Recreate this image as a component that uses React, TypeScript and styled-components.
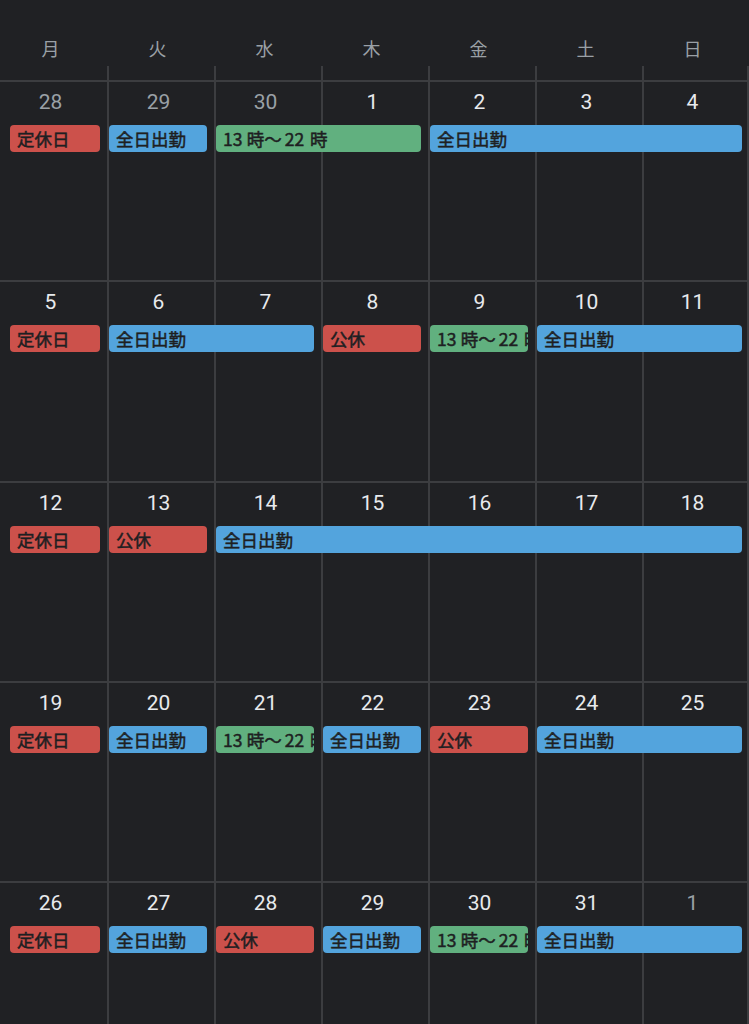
import React from "react";
import styled, { createGlobalStyle } from "styled-components";

const GlobalStyle = createGlobalStyle`
  html, body {
    margin: 0;
    padding: 0;
    background: #202124;
  }
  * {
    box-sizing: border-box;
  }
`;

const LINE = "#3c3d40";

const Page = styled.div`
  width: 749px;
  height: 1024px;
  overflow: hidden;
  background: #202124;
  font-family: "Noto Sans CJK JP", "Noto Sans", sans-serif;
`;

const Header = styled.div`
  display: grid;
  grid-template-columns: repeat(7, 1fr);
  height: 82px;
  border-bottom: 2px solid ${LINE};
`;

const HeaderCell = styled.div`
  display: flex;
  flex-direction: column;
`;

const WeekdayLabel = styled.div`
  flex: 1;
  padding: 35px 6px 0 0;
  text-align: center;
  font-size: 18px;
  line-height: 26px;
  color: #9aa0a6;
`;

const Tick = styled.div<{ $first: boolean; $last: boolean }>`
  height: 14px;
  border-left: ${(p) => (p.$first ? "none" : `2px solid ${LINE}`)};
  border-right: ${(p) => (p.$last ? `2px solid ${LINE}` : "none")};
`;

const Week = styled.div`
  display: grid;
  grid-template-columns: repeat(7, 1fr);
  grid-template-rows: 43px 27px 1fr;
  height: 200.3px;
  border-bottom: 2px solid ${LINE};
`;

const DayCell = styled.div<{ $col: number }>`
  grid-row: 1 / -1;
  grid-column: ${(p) => p.$col};
  padding-right: 6px;
  border-left: ${(p) => (p.$col === 1 ? "none" : `2px solid ${LINE}`)};
  border-right: ${(p) => (p.$col === 7 ? `2px solid ${LINE}` : "none")};
`;

const DayNumber = styled.div<{ $muted: boolean }>`
  padding-top: 8px;
  text-align: center;
  font-family: Roboto, "Noto Sans", sans-serif;
  font-size: 21px;
  line-height: 24px;
  color: ${(p) => (p.$muted ? "#9aa0a6" : "#e8eaed")};
`;

type Kind = "off" | "work" | "shift";

const COLORS: Record<Kind, string> = {
  off: "#cc514b",
  work: "#53a4dd",
  shift: "#61b07f",
};

const Bar = styled.div<{ $start: number; $span: number; $kind: Kind }>`
  grid-row: 2;
  grid-column: ${(p) => p.$start} / span ${(p) => p.$span};
  margin-left: ${(p) => (p.$start === 1 ? "10px" : "2px")};
  margin-right: 7px;
  background: ${(p) => COLORS[p.$kind]};
  border-radius: 4px;
  padding: 0 7px;
  font-size: 17.5px;
  font-weight: 400;
  -webkit-text-stroke: 0.5px #1e1f22;
  line-height: 27px;
  color: #1e1f22;
  white-space: nowrap;
  overflow: hidden;
`;

type Ev = { start: number; span: number; kind: Kind; label: string };
type WeekData = { days: { n: number; muted?: boolean }[]; events: Ev[] };

const SHIFT = "13\u2005時〜\u200622\u2004時";

const d = (n: number, muted = false) => ({ n, muted });

const weeks: WeekData[] = [
  {
    days: [d(28, true), d(29, true), d(30, true), d(1), d(2), d(3), d(4)],
    events: [
      { start: 1, span: 1, kind: "off", label: "定休日" },
      { start: 2, span: 1, kind: "work", label: "全日出勤" },
      { start: 3, span: 2, kind: "shift", label: SHIFT },
      { start: 5, span: 3, kind: "work", label: "全日出勤" },
    ],
  },
  {
    days: [d(5), d(6), d(7), d(8), d(9), d(10), d(11)],
    events: [
      { start: 1, span: 1, kind: "off", label: "定休日" },
      { start: 2, span: 2, kind: "work", label: "全日出勤" },
      { start: 4, span: 1, kind: "off", label: "公休" },
      { start: 5, span: 1, kind: "shift", label: SHIFT },
      { start: 6, span: 2, kind: "work", label: "全日出勤" },
    ],
  },
  {
    days: [d(12), d(13), d(14), d(15), d(16), d(17), d(18)],
    events: [
      { start: 1, span: 1, kind: "off", label: "定休日" },
      { start: 2, span: 1, kind: "off", label: "公休" },
      { start: 3, span: 5, kind: "work", label: "全日出勤" },
    ],
  },
  {
    days: [d(19), d(20), d(21), d(22), d(23), d(24), d(25)],
    events: [
      { start: 1, span: 1, kind: "off", label: "定休日" },
      { start: 2, span: 1, kind: "work", label: "全日出勤" },
      { start: 3, span: 1, kind: "shift", label: SHIFT },
      { start: 4, span: 1, kind: "work", label: "全日出勤" },
      { start: 5, span: 1, kind: "off", label: "公休" },
      { start: 6, span: 2, kind: "work", label: "全日出勤" },
    ],
  },
  {
    days: [d(26), d(27), d(28), d(29), d(30), d(31), d(1, true)],
    events: [
      { start: 1, span: 1, kind: "off", label: "定休日" },
      { start: 2, span: 1, kind: "work", label: "全日出勤" },
      { start: 3, span: 1, kind: "off", label: "公休" },
      { start: 4, span: 1, kind: "work", label: "全日出勤" },
      { start: 5, span: 1, kind: "shift", label: SHIFT },
      { start: 6, span: 2, kind: "work", label: "全日出勤" },
    ],
  },
];

const weekdays = ["月", "火", "水", "木", "金", "土", "日"];

const App = () => {
  return (
    <Page>
      <GlobalStyle />
      <Header>
        {weekdays.map((w, i) => (
          <HeaderCell key={w}>
            <WeekdayLabel>{w}</WeekdayLabel>
            <Tick $first={i === 0} $last={i === 6} />
          </HeaderCell>
        ))}
      </Header>
      {weeks.map((week, wi) => (
        <Week key={wi}>
          {week.days.map((day, i) => (
            <DayCell key={i} $col={i + 1}>
              <DayNumber $muted={!!day.muted}>{day.n}</DayNumber>
            </DayCell>
          ))}
          {week.events.map((ev, ei) => (
            <Bar key={ei} $start={ev.start} $span={ev.span} $kind={ev.kind}>
              {ev.label}
            </Bar>
          ))}
        </Week>
      ))}
    </Page>
  );
};

export default App;
